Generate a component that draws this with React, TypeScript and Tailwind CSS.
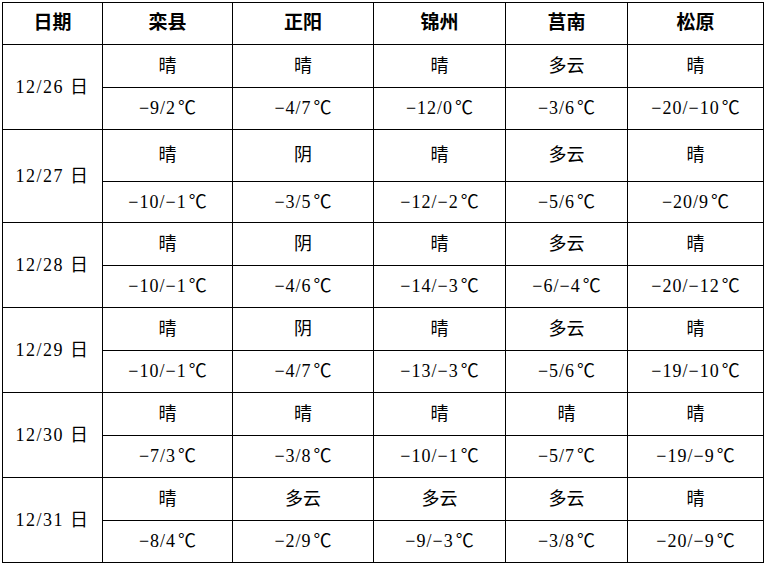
const cities = ['栾县', '正阳', '锦州', '莒南', '松原'];

type Day = {
  date: string;
  weather: string[];
  temps: string[];
  top: string;
  bottom: string;
};

const days: Day[] = [
  {
    date: '12/26',
    weather: ['晴', '晴', '晴', '多云', '晴'],
    temps: ['-9/2', '-4/7', '-12/0', '-3/6', '-20/-10'],
    top: 'h-[43px]',
    bottom: 'h-[42px]',
  },
  {
    date: '12/27',
    weather: ['晴', '阴', '晴', '多云', '晴'],
    temps: ['-10/-1', '-3/5', '-12/-2', '-5/6', '-20/9'],
    top: 'h-[52px]',
    bottom: 'h-[41px]',
  },
  {
    date: '12/28',
    weather: ['晴', '阴', '晴', '多云', '晴'],
    temps: ['-10/-1', '-4/6', '-14/-3', '-6/-4', '-20/-12'],
    top: 'h-[43px]',
    bottom: 'h-[42px]',
  },
  {
    date: '12/29',
    weather: ['晴', '阴', '晴', '多云', '晴'],
    temps: ['-10/-1', '-4/7', '-13/-3', '-5/6', '-19/-10'],
    top: 'h-[43px]',
    bottom: 'h-[42px]',
  },
  {
    date: '12/30',
    weather: ['晴', '晴', '晴', '晴', '晴'],
    temps: ['-7/3', '-3/8', '-10/-1', '-5/7', '-19/-9'],
    top: 'h-[43px]',
    bottom: 'h-[42px]',
  },
  {
    date: '12/31',
    weather: ['晴', '多云', '多云', '多云', '晴'],
    temps: ['-8/4', '-2/9', '-9/-3', '-3/8', '-20/-9'],
    top: 'h-[43px]',
    bottom: 'h-[42px]',
  },
];

const cell = 'border border-black text-center align-middle p-0';

export default function App() {
  return (
    <div className="w-[764px] h-[565px] bg-white pl-[2px] pt-[2px] font-['Liberation_Serif','Noto_Sans_CJK_SC',serif] text-[18px] text-black">
      <table className="table-fixed border-collapse w-[761px]">
        <colgroup>
          <col className="w-[100px]" />
          <col className="w-[130px]" />
          <col className="w-[141px]" />
          <col className="w-[132px]" />
          <col className="w-[122px]" />
          <col className="w-[136px]" />
        </colgroup>
        <thead>
          <tr className="h-[42px]">
            <th className={`${cell} font-bold text-[19px]`}>日期</th>
            {cities.map((c) => (
              <th key={c} className={`${cell} font-bold text-[19px]`}>
                {c}
              </th>
            ))}
          </tr>
        </thead>
        <tbody>
          {days.map((d) => (
            <>
              <tr key={d.date + 'a'} className={d.top}>
                <td rowSpan={2} className={`${cell} tracking-[1.5px]`}>
                  {d.date} 日
                </td>
                {d.weather.map((w, i) => (
                  <td key={i} className={cell}>
                    {w}
                  </td>
                ))}
              </tr>
              <tr key={d.date + 'b'} className={d.bottom}>
                {d.temps.map((t, i) => (
                  <td key={i} className={`${cell} tracking-[1px]`}>
                    {t.replace(/-/g, '−')}
                    <span className="ml-[2px] tracking-normal">℃</span>
                  </td>
                ))}
              </tr>
            </>
          ))}
        </tbody>
      </table>
    </div>
  );
}
